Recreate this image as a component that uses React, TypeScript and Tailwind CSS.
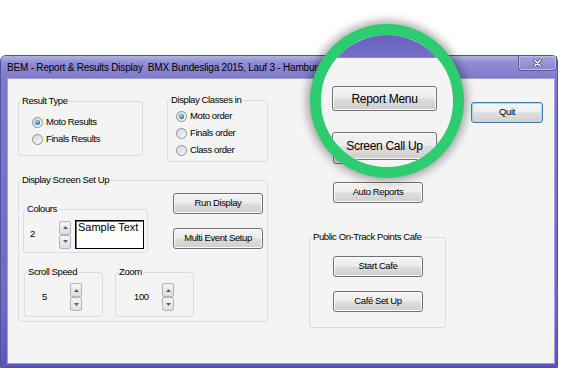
import type { ReactNode } from "react";

function Btn({ children, className = "" }: { children?: ReactNode; className?: string }) {
  return (
    <div
      className={
        "flex items-center justify-center rounded-[3px] border border-[#707070] bg-[linear-gradient(to_bottom,#f4f4f4_0%,#ececec_48%,#dddddd_52%,#cfcfcf_100%)] shadow-[inset_0_0_0_1px_#fbfbfb] text-black " +
        className
      }
    >
      {children}
    </div>
  );
}

function Group({ label, className = "", children }: { label: string; className?: string; children?: ReactNode }) {
  return (
    <div className={"relative shrink-0 rounded-[3px] border border-[#d5dfe5] " + className}>
      {/* legend sits over the top border */}
      <span className="absolute left-[2px] -top-[7px] bg-[#f4f4f4] px-[1px] leading-[12px] whitespace-nowrap">{label}</span>
      {children}
    </div>
  );
}

function Radio({ label, checked = false }: { label: string; checked?: boolean }) {
  return (
    <div className="flex h-[17px] items-center">
      <div className="flex h-[11px] w-[11px] items-center justify-center rounded-full border border-[#8e8f8f] bg-[linear-gradient(135deg,#d8d8d8,#f8f8f8)]">
        {checked && <div className="h-[5px] w-[5px] rounded-full bg-[radial-gradient(circle_at_40%_35%,#9fd3ff,#1f6fc6_70%)]" />}
      </div>
      <span className="ml-[3px]">{label}</span>
    </div>
  );
}

function Spin() {
  const half = "flex h-[14px] w-[12px] items-center justify-center rounded-[2px] border border-[#b4b4b4] bg-[linear-gradient(to_bottom,#f6f6f6,#dedede)]";
  return (
    <div className="flex shrink-0 flex-col">
      <div className={half}>
        <svg width="5" height="3" viewBox="0 0 5 3"><path d="M2.5 0L5 3H0z" fill="#4d6185" /></svg>
      </div>
      <div className={half}>
        <svg width="5" height="3" viewBox="0 0 5 3"><path d="M0 0H5L2.5 3z" fill="#4d6185" /></svg>
      </div>
    </div>
  );
}

export default function App() {
  return (
    <div className="relative h-[370px] w-[561px] overflow-hidden bg-white font-['Liberation_Sans',Arial,sans-serif] text-[9.5px] tracking-[-0.4px] text-black">
      <div className="pt-[55px]">
        <div className="flex h-[313px] w-[558px] flex-col rounded-t-[6px] border border-[#54529a] bg-[linear-gradient(to_bottom,#7f7bcb,#6e6ac6_80%,#5955c2)]">
          {/* title bar */}
          <div className="flex h-[22px] shrink-0 justify-between rounded-t-[5px] bg-[linear-gradient(to_bottom,#b3b1e2_0%,#908dd5_30%,#7f7bcb_100%)]">
            <div className="flex items-center overflow-hidden whitespace-pre pl-[6px] text-[10px] tracking-[-0.2px]">
              BEM - Report &amp; Results Display  BMX Bundesliga 2015, Lauf 3 - Hamburg
            </div>
            <div className="flex h-[15px] w-[39px] shrink-0 items-center justify-center rounded-b-[4px] border border-t-0 border-[#5c59a6] bg-[linear-gradient(to_bottom,#a7a4de,#8884d0)] shadow-[inset_0_0_0_1px_#b9b7e6]">
              <svg width="9" height="8" viewBox="0 0 9 8">
                <path d="M1.5 1l6 6M7.5 1l-6 6" stroke="#3b3a6b" strokeWidth="3" strokeLinecap="round" />
                <path d="M1.5 1l6 6M7.5 1l-6 6" stroke="#ffffff" strokeWidth="1.6" strokeLinecap="round" />
              </svg>
            </div>
          </div>

          {/* client area */}
          <div className="mb-[3px] ml-[6px] mr-[2px] flex flex-1 border border-[#a29fd2] bg-[#f4f4f4]">
            {/* left column */}
            <div className="ml-[10px] flex w-[250px] shrink-0 flex-col pt-[21px]">
              <div className="flex items-start">
                <Group label="Result Type" className="mt-[1px] h-[55px] w-[125px]">
                  <div className="pl-[13px] pt-[12px]">
                    <Radio label="Moto Results" checked />
                    <Radio label="Finals Results" />
                  </div>
                </Group>
                <Group label="Display Classes in" className="ml-[24px] h-[62px] w-[101px]">
                  <div className="pl-[8px] pt-[7px]">
                    <Radio label="Moto order" checked />
                    <Radio label="Finals order" />
                    <Radio label="Class order" />
                  </div>
                </Group>
              </div>

              <Group label="Display Screen Set Up" className="mt-[18px] h-[142px] w-[250px]">
                <div className="flex items-start pl-[4px]">
                  <Group label="Colours" className="mt-[28px] h-[44px] w-[125px]">
                    <div className="flex items-center pl-[6px] pt-[10px]">
                      <span className="w-[29px]">2</span>
                      <Spin />
                      <div className="ml-[4px] h-[29px] w-[69px] border border-black bg-white px-[2px] text-[11px] leading-[13px] tracking-normal shadow-[inset_1px_1px_0_#6f6f6f]">
                        Sample Text
                      </div>
                    </div>
                  </Group>
                  <div className="ml-[25px] mt-[12px] flex flex-col">
                    <Btn className="h-[21px] w-[90px]">Run Display</Btn>
                    <Btn className="mt-[14px] h-[21px] w-[90px]">Multi Event Setup</Btn>
                  </div>
                </div>
                <div className="mt-[19px] flex pl-[5px]">
                  <Group label="Scroll Speed" className="h-[45px] w-[79px]">
                    <div className="flex items-center pl-[17px] pt-[10px]">
                      <span className="w-[28px]">5</span>
                      <Spin />
                    </div>
                  </Group>
                  <Group label="Zoom" className="ml-[12px] h-[45px] w-[79px]">
                    <div className="flex items-center pl-[18px] pt-[10px]">
                      <span className="w-[28px]">100</span>
                      <Spin />
                    </div>
                  </Group>
                </div>
              </Group>
            </div>

            {/* middle column (first two buttons sit under the magnifier) */}
            <div className="ml-[41px] flex w-[137px] shrink-0 flex-col pt-[25px]">
              <Btn className="ml-[24px] h-[21px] w-[90px]" />
              <Btn className="ml-[24px] mt-[18px] h-[21px] w-[90px]" />
              <Btn className="ml-[24px] mt-[18px] h-[21px] w-[90px]">Auto Reports</Btn>
              <Group label="Public On-Track Points Cafe" className="mt-[34px] h-[91px] w-[137px]">
                <div className="flex flex-col pl-[23px] pt-[18px]">
                  <Btn className="h-[21px] w-[90px]">Start Cafe</Btn>
                  <Btn className="mt-[14px] h-[21px] w-[90px]">Café Set Up</Btn>
                </div>
              </Group>
            </div>

            {/* quit column */}
            <div className="ml-[25px] pt-[23px]">
              <div className="flex h-[21px] w-[72px] items-center justify-center rounded-[3px] border border-[#3c7fb1] bg-[linear-gradient(to_bottom,#f6f6f6_0%,#eeeeee_48%,#dfdfdf_52%,#d2d2d2_100%)] shadow-[inset_0_0_0_1px_#9fdcf8]">
                Quit
              </div>
            </div>
          </div>
        </div>
      </div>

      {/* magnifier circle over the window */}
      <div className="absolute left-[310px] top-[24px] h-[154px] w-[154px] overflow-hidden rounded-full border-[11px] border-[#2dcc70] bg-[#f4f4f4] shadow-[0_0_10px_3px_rgba(0,0,0,0.35)]">
        <div className="h-[23px] border-b border-[#8a87c9] bg-[linear-gradient(to_bottom,#6763bd,#7470c7)]" />
        <Btn className="ml-[11px] mt-[28px] h-[25px] w-[105px] text-[12px] tracking-[-0.3px]">Report Menu</Btn>
        <Btn className="ml-[11px] mt-[21px] h-[28px] w-[105px] text-[12px] tracking-[-0.3px]">Screen Call Up</Btn>
      </div>
    </div>
  );
}
